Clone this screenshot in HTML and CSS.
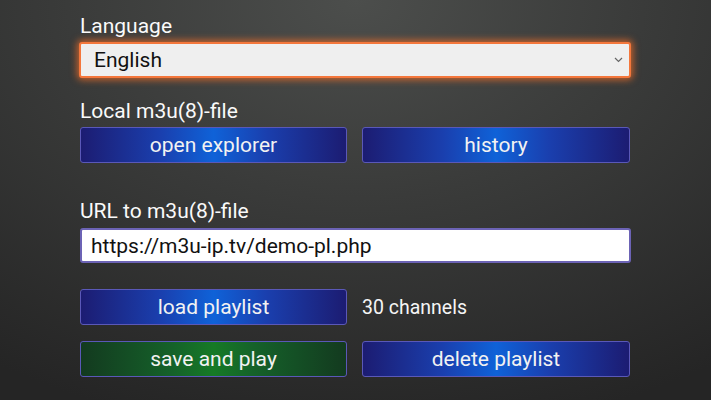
FILE: index.html
```html
<!DOCTYPE html>
<html>
<head>
<meta charset="utf-8">
<link rel="stylesheet" href="styles.css">
</head>
<body>
<div class="page">
  <div class="label first">Language</div>
  <div class="select">
    <span class="select-text">English</span>
    <svg class="chev" width="9" height="6" viewBox="0 0 9 6"><path d="M1 1 L4.5 4.5 L8 1" fill="none" stroke="#666" stroke-width="1.2"/></svg>
  </div>

  <div class="label local">Local m3u(8)-file</div>
  <div class="row">
    <div class="btn blue">open explorer</div>
    <div class="btn blue">history</div>
  </div>

  <div class="label url">URL to m3u(8)-file</div>
  <div class="input">https://m3u-ip.tv/demo-pl.php</div>

  <div class="row load">
    <div class="btn blue">load playlist</div>
    <div class="info">30 channels</div>
  </div>
  <div class="row save">
    <div class="btn green">save and play</div>
    <div class="btn blue">delete playlist</div>
  </div>
</div>
</body>
</html>
```

FILE: styles.css
```css
html, body {
  margin: 0;
  padding: 0;
  height: 100%;
}
body {
  background: radial-gradient(ellipse 90% 110% at 50% 0%, #4c4e4c 0%, #3a3b3a 45%, #252525 100%);
  font-family: Roboto, "Noto Sans", sans-serif;
  color: #fff;
  overflow: hidden;
}
.page {
  width: 551px;
  margin-left: 80px;
  padding-top: 14px;
}
.label {
  font-size: 21px;
  line-height: 24px;
  color: #fafafa;
}
.label.first { margin-bottom: 4px; }
.label.local { margin-top: 21px; margin-bottom: 4px; }
.label.url { margin-top: 36px; margin-bottom: 5px; }
.select {
  box-sizing: border-box;
  height: 36px;
  margin-left: -1px;
  background: #efefef;
  border: 2px solid #f4773c;
  border-radius: 3px;
  box-shadow: 0 0 7px 2px rgba(240, 110, 40, 0.75);
  display: flex;
  align-items: center;
  justify-content: space-between;
  padding: 0 6px 0 13px;
  color: #111;
  font-size: 21px;
}
.row {
  display: grid;
  grid-template-columns: 267px 268px;
  column-gap: 15px;
}
.btn {
  box-sizing: border-box;
  height: 36px;
  border: 1px solid #5a58b8;
  border-radius: 3px;
  display: flex;
  align-items: center;
  justify-content: center;
  font-size: 21px;
  color: #f2f2f2;
}
.btn.blue {
  background: linear-gradient(90deg, #1c1c72 0%, #1a3fae 30%, #0f62d8 50%, #1a3fae 70%, #1c1c72 100%);
}
.btn.green {
  background: linear-gradient(90deg, #133a1f 0%, #15622a 35%, #167a26 50%, #15622a 65%, #133a1f 100%);
}
.input {
  box-sizing: border-box;
  height: 35px;
  background: #fff;
  border: 2px solid #6c63b5;
  border-radius: 3px;
  display: flex;
  align-items: center;
  padding-left: 9px;
  color: #111;
  font-size: 21px;
}
.row.load { margin-top: 26px; }
.row.save { margin-top: 16px; }
.info {
  display: flex;
  align-items: center;
  font-size: 19.5px;
  color: #f5f5f5;
}
```
